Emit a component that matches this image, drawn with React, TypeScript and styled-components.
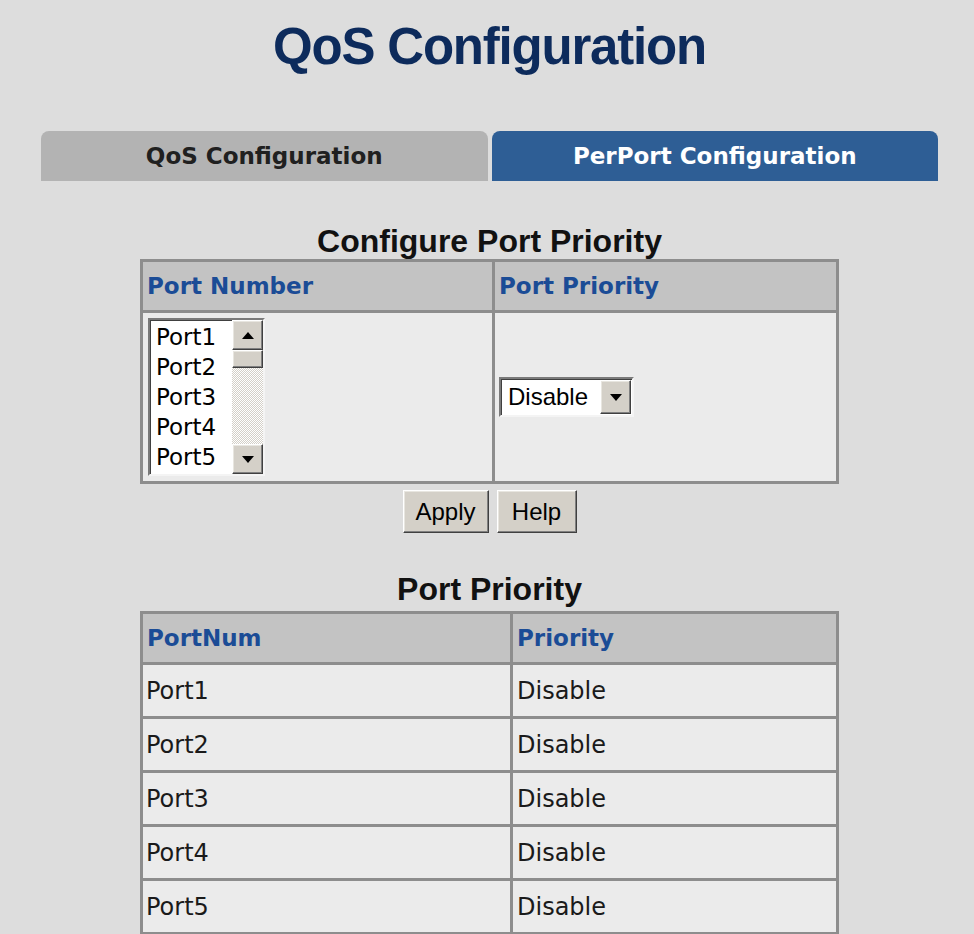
import React from 'react';
import styled, { createGlobalStyle } from 'styled-components';

const GlobalStyle = createGlobalStyle`
  html, body {
    margin: 0;
    padding: 0;
    background: #dddddd;
  }
  body {
    font-family: "Liberation Sans", Arial, sans-serif;
  }
`;

const Page = styled.main`
  width: 897px;
  padding: 17px 0 0 41px;
  display: flex;
  flex-direction: column;
  align-items: center;
`;

const Title = styled.h1`
  margin: 0;
  height: 60px;
  line-height: 60px;
  font-size: 51px;
  font-weight: bold;
  letter-spacing: -1.2px;
  color: #0d2b5c;
`;

const Tabs = styled.nav`
  display: flex;
  gap: 4px;
  width: 100%;
  margin-top: 54px;
`;

const Tab = styled.div<{ $active?: boolean }>`
  flex: 1;
  height: 50px;
  display: flex;
  align-items: center;
  justify-content: center;
  border-radius: 8px 8px 0 0;
  background: ${({ $active }) => ($active ? '#2e5e95' : '#b3b3b3')};
  color: ${({ $active }) => ($active ? '#ffffff' : '#202020')};
  font-family: "DejaVu Sans", Verdana, sans-serif;
  font-weight: bold;
  font-size: 23px;
`;

const SectionTitle = styled.h2<{ $top: number; $bottom: number }>`
  margin: ${({ $top }) => $top}px 0 ${({ $bottom }) => $bottom}px;
  height: 30px;
  line-height: 30px;
  font-size: 32px;
  font-weight: bold;
  color: #111;
`;

const Grid = styled.div<{ $left: number; $rows: string }>`
  box-sizing: border-box;
  width: 699px;
  display: grid;
  grid-template-columns: ${({ $left }) => $left}px 1fr;
  grid-template-rows: ${({ $rows }) => $rows};
  gap: 3px;
  padding: 3px;
  background: #8d8d8d;
`;

const HeadCell = styled.div`
  display: flex;
  align-items: center;
  padding-left: 4px;
  background: #c3c3c3;
  color: #1b4c96;
  font-family: "DejaVu Sans", Verdana, sans-serif;
  font-weight: bold;
  font-size: 23px;
`;

const Cell = styled.div<{ $pad?: number }>`
  display: flex;
  align-items: center;
  padding-left: ${({ $pad }) => $pad ?? 4}px;
  background: #ebebeb;
  color: #1a1a1a;
  font-family: "DejaVu Sans", Verdana, sans-serif;
  font-size: 24px;
`;

const ListBox = styled.div`
  box-sizing: border-box;
  width: 117px;
  height: 158px;
  display: flex;
  background: #fff;
  border: 2px solid;
  border-color: #7a7a7a #f4f4f4 #f4f4f4 #7a7a7a;
  box-shadow: inset 1px 1px #404040;
`;

const Options = styled.ul`
  flex: 1;
  margin: 0;
  padding: 2px 0 0 6px;
  list-style: none;
  font-size: 23px;
  line-height: 30px;
  color: #000;
  overflow: hidden;
`;

const ScrollBar = styled.div`
  width: 31px;
  display: flex;
  flex-direction: column;
`;

const ArrowButton = styled.div<{ $h: number }>`
  box-sizing: border-box;
  height: ${({ $h }) => $h}px;
  display: flex;
  align-items: center;
  justify-content: center;
  background: #d4d0c8;
  border: 1px solid;
  border-color: #ffffff #404040 #404040 #ffffff;
  box-shadow: inset -1px -1px #808080, inset 1px 1px #e8e6e0;
`;

const Track = styled.div`
  flex: 1;
  background: repeating-conic-gradient(#d4d0c8 0 25%, #ffffff 0 50%) 0 0 / 2px 2px;
`;

const Dropdown = styled.div`
  box-sizing: border-box;
  width: 135px;
  height: 40px;
  display: flex;
  align-items: center;
  background: #fff;
  border: 2px solid;
  border-color: #7a7a7a #f4f4f4 #f4f4f4 #7a7a7a;
  box-shadow: inset 1px 1px #404040;
  font-family: "Liberation Sans", Arial, sans-serif;
  font-size: 24px;
  color: #000;
`;

const DropText = styled.span`
  flex: 1;
  padding-left: 7px;
`;

const DropButton = styled(ArrowButton)`
  width: 31px;
  margin-right: 1px;
`;

const ButtonRow = styled.div`
  display: flex;
  gap: 8px;
  margin-top: 6px;
`;

const Button = styled.button<{ $w: number }>`
  box-sizing: border-box;
  width: ${({ $w }) => $w}px;
  height: 43px;
  padding: 0;
  background: #d4d0c8;
  border: 1px solid;
  border-color: #ffffff #404040 #404040 #ffffff;
  box-shadow: inset -1px -1px #808080, inset 1px 1px #e8e6e0;
  font-family: "Liberation Sans", Arial, sans-serif;
  font-size: 24px;
  color: #000;
`;

const Arrow = ({ up }: { up?: boolean }) => (
  <svg width="12" height="7" viewBox="0 0 12 7">
    <path d={up ? 'M6 0 L12 7 L0 7 Z' : 'M0 0 L12 0 L6 7 Z'} fill="#000" />
  </svg>
);

const ports = ['Port1', 'Port2', 'Port3', 'Port4', 'Port5'];

export default function App() {
  return (
    <>
      <GlobalStyle />
      <Page>
        <Title>QoS Configuration</Title>

        <Tabs>
          <Tab>QoS Configuration</Tab>
          <Tab $active>PerPort Configuration</Tab>
        </Tabs>

        <SectionTitle $top={45} $bottom={3}>Configure Port Priority</SectionTitle>
        <Grid $left={349} $rows="48px 168px">
          <HeadCell>Port Number</HeadCell>
          <HeadCell>Port Priority</HeadCell>
          <Cell $pad={5}>
            <ListBox>
              <Options>
                {ports.map((p) => (
                  <li key={p}>{p}</li>
                ))}
              </Options>
              <ScrollBar>
                <ArrowButton $h={30}>
                  <Arrow up />
                </ArrowButton>
                <ArrowButton $h={18} />
                <Track />
                <ArrowButton $h={30}>
                  <Arrow />
                </ArrowButton>
              </ScrollBar>
            </ListBox>
          </Cell>
          <Cell>
            <Dropdown>
              <DropText>Disable</DropText>
              <DropButton $h={34}>
                <Arrow />
              </DropButton>
            </Dropdown>
          </Cell>
        </Grid>

        <ButtonRow>
          <Button $w={86}>Apply</Button>
          <Button $w={80}>Help</Button>
        </ButtonRow>

        <SectionTitle $top={41} $bottom={7}>Port Priority</SectionTitle>
        <Grid $left={367} $rows="48px repeat(5, 51px)">
          <HeadCell>PortNum</HeadCell>
          <HeadCell>Priority</HeadCell>
          {ports.map((p) => (
            <React.Fragment key={p}>
              <Cell $pad={3}>{p}</Cell>
              <Cell>Disable</Cell>
            </React.Fragment>
          ))}
        </Grid>
      </Page>
    </>
  );
}
